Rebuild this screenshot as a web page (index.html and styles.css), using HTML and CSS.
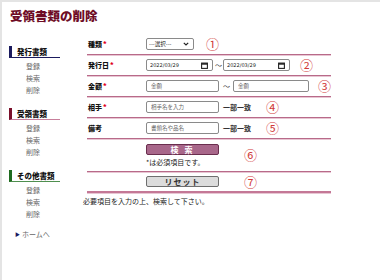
FILE: index.html
```html
<!DOCTYPE html>
<html lang="ja">
<head>
    <meta charset="UTF-8">
    <meta name="viewport" content="width=device-width, initial-scale=1.0">
    <title>受領書類の削除</title>
    <link rel="stylesheet" href="styles.css">
</head>
<body>
    <div class="page">
        <h1 class="page-title">受領書類の削除</h1>

        <div class="layout">
            <nav class="sidebar">
                <div class="side-group">
                    <div class="side-heading issue">発行書類</div>
                    <ul class="side-links">
                        <li>登録</li>
                        <li>検索</li>
                        <li>削除</li>
                    </ul>
                </div>
                <div class="side-group">
                    <div class="side-heading receive">受領書類</div>
                    <ul class="side-links">
                        <li>登録</li>
                        <li>検索</li>
                        <li>削除</li>
                    </ul>
                </div>
                <div class="side-group">
                    <div class="side-heading other">その他書類</div>
                    <ul class="side-links">
                        <li>登録</li>
                        <li>検索</li>
                        <li>削除</li>
                    </ul>
                </div>
                <div class="home"><span class="home-mark">▶</span>ホームへ</div>
            </nav>

            <main class="content">
                <form class="search-form">
                    <div class="form-row">
                        <label class="field-label">種類<span class="req">*</span></label>
                        <div class="field">
                            <label class="select-box">
                                <select>
                                    <option>---選択---</option>
                                </select>
                                <svg width="6" height="4" viewBox="0 0 6 4"><path d="M0.8 0.8 L3 3 L5.2 0.8" fill="none" stroke="#222" stroke-width="1.2"/></svg>
                            </label>
                            <span class="num n1">①</span>
                        </div>
                    </div>

                    <div class="form-row">
                        <label class="field-label">発行日<span class="req">*</span></label>
                        <div class="field">
                            <label class="date-box">
                                <input type="text" value="2022/03/29">
                                <svg width="7" height="7" viewBox="0 0 7 7"><rect x="0.6" y="1.1" width="5.8" height="5.3" fill="none" stroke="#222" stroke-width="1.1"/><rect x="0.6" y="1.1" width="5.8" height="1.6" fill="#222"/></svg>
                            </label>
                            <span class="tilde">〜</span>
                            <label class="date-box">
                                <input type="text" value="2022/03/29">
                                <svg width="7" height="7" viewBox="0 0 7 7"><rect x="0.6" y="1.1" width="5.8" height="5.3" fill="none" stroke="#222" stroke-width="1.1"/><rect x="0.6" y="1.1" width="5.8" height="1.6" fill="#222"/></svg>
                            </label>
                            <span class="num n2">②</span>
                        </div>
                    </div>

                    <div class="form-row">
                        <label class="field-label">金額<span class="req">*</span></label>
                        <div class="field">
                            <input class="text-input" type="text" placeholder="金額">
                            <span class="tilde wide">〜</span>
                            <input class="text-input long" type="text" placeholder="金額">
                            <span class="num n3">③</span>
                        </div>
                    </div>

                    <div class="form-row">
                        <label class="field-label">相手<span class="req">*</span></label>
                        <div class="field">
                            <input class="text-input" type="text" placeholder="相手名を入力">
                            <span class="match">一部一致</span>
                            <span class="num n4">④</span>
                        </div>
                    </div>

                    <div class="form-row">
                        <label class="field-label">備考</label>
                        <div class="field">
                            <input class="text-input" type="text" placeholder="書類名や品名">
                            <span class="match">一部一致</span>
                            <span class="num n4">⑤</span>
                        </div>
                    </div>

                    <div class="form-row tall">
                        <span class="field-label"></span>
                        <div class="field">
                            <div class="button-stack">
                                <button type="button" class="btn btn-search">検 索</button>
                                <p class="note">*は必須項目です。</p>
                            </div>
                            <span class="num n6">⑥</span>
                        </div>
                    </div>

                    <div class="form-row last">
                        <span class="field-label"></span>
                        <div class="field">
                            <div class="button-stack">
                                <button type="button" class="btn btn-reset">リセット</button>
                            </div>
                            <span class="num n6">⑦</span>
                        </div>
                    </div>
                </form>

                <p class="message">必要項目を入力の上、検索して下さい。</p>
            </main>
        </div>
    </div>
</body>
</html>
```

FILE: styles.css
```css
* {
    box-sizing: border-box;
}
body {
    margin: 0;
    font-family: "Noto Sans CJK JP", "Noto Sans", sans-serif;
    color: #222;
    background-color: #fff;
}
.page {
    min-height: 100vh;
    border-top: 2px solid #e4e4e4;
    border-left: 2px solid #e4e4e4;
}
.page-title {
    margin: 0;
    padding: 6px 0 0 8px;
    font-size: 12.5px;
    line-height: 15px;
    font-weight: 900;
    color: #6e0c26;
}
.layout {
    display: flex;
    margin-top: 11px;
}

/* sidebar */
.sidebar {
    width: 81px;
    flex-shrink: 0;
    padding: 12px 0 0 7px;
}
.side-group + .side-group {
    margin-top: 12px;
}
.side-heading {
    width: 51px;
    height: 12px;
    padding-left: 5px;
    font-size: 7.5px;
    line-height: 11px;
    font-weight: 900;
    color: #111;
    border-left: 3px solid #1b1b5e;
    border-bottom: 1px solid #1b1b5e;
}
.side-heading.receive {
    border-left-color: #7a0f2a;
    border-bottom-color: #c77f9b;
}
.side-heading.other {
    border-left-color: #1f6b1f;
    border-bottom-color: #4f8f4f;
}
.side-links {
    list-style: none;
    margin: 2px 0 0 0;
    padding-left: 17px;
}
.side-links li {
    font-size: 7px;
    line-height: 12px;
    color: #666;
}
.home {
    margin-top: 8px;
    padding-left: 6px;
    font-size: 7px;
    line-height: 12px;
    color: #666;
}
.home-mark {
    font-size: 5px;
    color: #1b1b5e;
    margin-right: 2px;
    vertical-align: 1px;
}

/* form */
.content {
    flex: 1;
}
.search-form {
    width: 244px;
    margin-left: 4px;
}
.form-row {
    display: grid;
    grid-template-columns: 58px 1fr;
    align-items: center;
    height: 21px;
    padding-left: 1px;
    border-bottom: 1px solid #b86a89;
    box-shadow: 0 1px 0 #e8c6d3;
}
.form-row.tall {
    height: 33px;
}
.form-row.last {
    border-bottom-width: 2px;
    border-bottom-color: #c47896;
}
.field-label {
    font-size: 7px;
    font-weight: 900;
    color: #111;
}
.req {
    color: #e0001a;
    margin-left: 1px;
}
.field {
    display: flex;
    align-items: center;
}
.select-box,
.date-box {
    display: flex;
    align-items: center;
    justify-content: space-between;
    height: 12px;
    border: 1px solid #8a8a8a;
    border-radius: 2px;
    background-color: #fff;
}
.select-box {
    width: 48px;
    padding: 0 4px 0 2px;
}
.select-box select {
    appearance: none;
    border: none;
    background: none;
    padding: 0;
    font-family: inherit;
    font-size: 5.5px;
    color: #222;
    outline: none;
}
.date-box {
    width: 67px;
    padding: 0 4px 0 3px;
}
.date-box input {
    width: 46px;
    border: none;
    padding: 0;
    font-family: "DejaVu Sans", sans-serif;
    font-size: 5px;
    color: #222;
    outline: none;
}
.text-input {
    width: 73px;
    height: 12px;
    padding: 0 4px;
    border: 1px solid #8a8a8a;
    border-radius: 2px;
    font-family: inherit;
    font-size: 5.5px;
    outline: none;
}
.text-input.long {
    width: 76px;
}
.text-input::placeholder {
    color: #666;
}
.tilde {
    font-size: 7px;
    color: #333;
    margin: 0 1px 0 2px;
}
.tilde.wide {
    margin: 0 3px 0 4px;
}
.match {
    margin-left: 4px;
    font-size: 7px;
    font-weight: bold;
    color: #333;
}
.num {
    font-size: 13px;
    line-height: 14px;
    color: #d13a3a;
}
.n1 {
    margin-left: 12px;
}
.n2 {
    margin-left: 10px;
}
.n3 {
    margin-left: 9px;
}
.n4 {
    margin-left: 15px;
}
.n6 {
    margin-left: 25px;
}
.button-stack {
    width: 73px;
}
.btn {
    display: block;
    width: 73px;
    height: 11px;
    padding: 0;
    border-radius: 2px;
    font-family: inherit;
    font-size: 8px;
    line-height: 9px;
    font-weight: bold;
    cursor: pointer;
}
.btn-search {
    background-color: #a8678a;
    border: 1px solid #6a2e4e;
    color: #fff;
    letter-spacing: 2px;
}
.btn-reset {
    background-color: #dcdcdc;
    border: 1px solid #6e6e6e;
    color: #333;
    letter-spacing: 1px;
}
.note {
    margin: 3px 0 0 0;
    font-size: 7px;
    line-height: 8px;
    color: #222;
    white-space: nowrap;
}
.message {
    margin: 3px 0 0 0;
    font-size: 7px;
    line-height: 10px;
    color: #222;
}
```
